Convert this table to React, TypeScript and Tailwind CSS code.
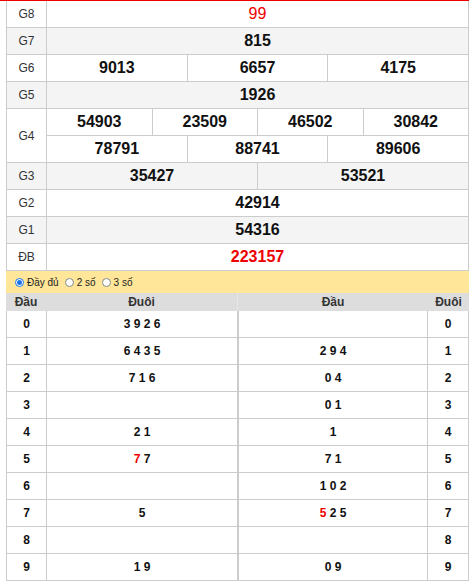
const prizes: { label: string; lines: string[][]; gray?: boolean; red?: boolean; regular?: boolean }[] = [
  { label: "G8", lines: [["99"]], red: true, regular: true },
  { label: "G7", lines: [["815"]], gray: true },
  { label: "G6", lines: [["9013", "6657", "4175"]] },
  { label: "G5", lines: [["1926"]], gray: true },
  { label: "G4", lines: [["54903", "23509", "46502", "30842"], ["78791", "88741", "89606"]] },
  { label: "G3", lines: [["35427", "53521"]], gray: true },
  { label: "G2", lines: [["42914"]] },
  { label: "G1", lines: [["54316"]], gray: true },
  { label: "ĐB", lines: [["223157"]], red: true },
];

// [red part, rest]
const heads: [string, string][] = [
  ["", "3 9 2 6"],
  ["", "6 4 3 5"],
  ["", "7 1 6"],
  ["", ""],
  ["", "2 1"],
  ["7", " 7"],
  ["", ""],
  ["", "5"],
  ["", ""],
  ["", "1 9"],
];

const tails: [string, string][] = [
  ["", ""],
  ["", "2 9 4"],
  ["", "0 4"],
  ["", "0 1"],
  ["", "1"],
  ["", "7 1"],
  ["", "1 0 2"],
  ["5", " 2 5"],
  ["", ""],
  ["", "0 9"],
];

function Nums({ v }: { v: [string, string] }) {
  return (
    <span className="whitespace-pre">
      {v[0] && <span className="text-[#e00]">{v[0]}</span>}
      {v[1]}
    </span>
  );
}

function Radio({ on, label }: { on?: boolean; label: string }) {
  return (
    <span className="flex items-center gap-[3px]">
      <span
        className={`w-[9px] h-[9px] rounded-full border flex items-center justify-center bg-white ${
          on ? "border-[#1a73e8]" : "border-[#888]"
        }`}
      >
        {on && <span className="w-[5px] h-[5px] rounded-full bg-[#1a73e8]" />}
      </span>
      <span>{label}</span>
    </span>
  );
}

export default function App() {
  return (
    <div className="font-['Liberation_Sans',Arial,sans-serif] bg-white w-[472px] h-[586px] text-[#111]">
      <div className="w-[469px] h-px bg-[#e00]" />
      <div className="ml-[6px] w-[463px] border-l border-r border-[#ccc]">
        {prizes.map((p) => (
          <div
            key={p.label}
            className={`flex border-b border-[#ccc] ${p.lines.length > 1 ? "h-[54px]" : "h-[27px]"} ${
              p.gray ? "bg-[#f4f4f4]" : ""
            }`}
          >
            <div className="w-[40px] shrink-0 border-r border-[#ccc] flex items-center justify-center text-[12px] text-[#333]">
              {p.label}
            </div>
            <div className="flex-1 flex flex-col">
              {p.lines.map((line, i) => (
                <div
                  key={i}
                  className={`flex ${i === 0 && p.lines.length > 1 ? "h-[27px] border-b border-[#ccc]" : "flex-1"}`}
                >
                  {line.map((n, j) => (
                    <div
                      key={n}
                      className={`flex-1 basis-0 flex items-center justify-center text-[16px] ${
                        p.regular ? "font-normal" : "font-bold"
                      } ${p.red ? "text-[#e00]" : ""} ${j > 0 ? "border-l border-[#ccc]" : ""}`}
                    >
                      {n}
                    </div>
                  ))}
                </div>
              ))}
            </div>
          </div>
        ))}
      </div>

      <div className="ml-[6px] w-[463px] h-[22px] bg-[#ffe699] flex items-center gap-[6px] pl-[9px] text-[10px] text-[#222]">
        <Radio on label="Đầy đủ" />
        <Radio label="2 số" />
        <Radio label="3 số" />
      </div>

      <div className="ml-[6px] w-[463px] flex">
        <div className="w-[232px]">
          <div className="h-[18px] bg-[#ddd] flex text-[12px] font-bold text-[#333] border-r border-[#e6e6e6]">
            <div className="w-[40px] flex items-center justify-center">Đầu</div>
            <div className="flex-1 flex items-center justify-center">Đuôi</div>
          </div>
          {heads.map((h, i) => (
            <div key={i} className="h-[27px] flex border-b border-l border-r border-[#ccc] text-[12px] font-bold">
              <div className="w-[40px] shrink-0 border-r border-[#ccc] flex items-center justify-center">{i}</div>
              <div className="flex-1 flex items-center justify-center">
                <Nums v={h} />
              </div>
            </div>
          ))}
        </div>
        <div className="w-[231px]">
          <div className="h-[18px] bg-[#ddd] flex text-[12px] font-bold text-[#333]">
            <div className="flex-1 flex items-center justify-center">Đầu</div>
            <div className="w-[41px] flex items-center justify-center">Đuôi</div>
          </div>
          {tails.map((t, i) => (
            <div key={i} className="h-[27px] flex border-b border-l border-r border-[#ccc] text-[12px] font-bold">
              <div className="flex-1 flex items-center justify-center">
                <Nums v={t} />
              </div>
              <div className="w-[41px] shrink-0 border-l border-[#ccc] flex items-center justify-center">{i}</div>
            </div>
          ))}
        </div>
      </div>
    </div>
  );
}
